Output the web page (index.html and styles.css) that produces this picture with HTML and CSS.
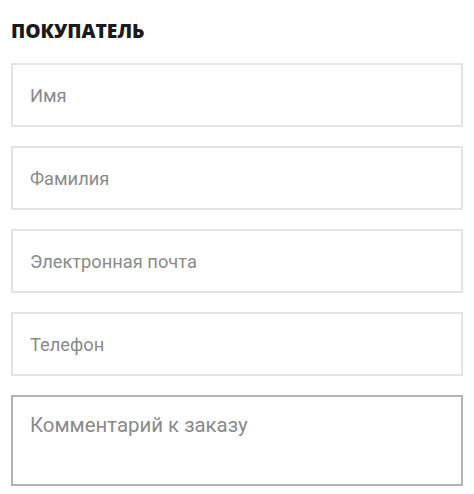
FILE: index.html
```html
<!DOCTYPE html>
<html>
  <head>
    <title>Покупатель</title>
    <meta name="viewport" content="width=device-width, initial-scale=1" />
    <link rel="stylesheet" href="styles.css">
  </head>
  <body>
    <div class="buyer">
      <h2 class="buyer-title">ПОКУПАТЕЛЬ</h2>
      <form class="buyer-form">
        <input class="field" type="text" placeholder="Имя">
        <input class="field" type="text" placeholder="Фамилия">
        <input class="field" type="email" placeholder="Электронная почта">
        <input class="field" type="tel" placeholder="Телефон">
        <textarea class="field comment" placeholder="Комментарий к заказу"></textarea>
      </form>
    </div>
  </body>
</html>
```

FILE: styles.css
```css
html {
  font-family: Roboto, "Noto Sans", sans-serif;
}
body {
  margin: 0;
  background-color: white;
}
.buyer {
  padding: 18px 11px 0 11px;
}
.buyer-title {
  margin: 0 0 19px 0;
  font-family: "Open Sans", Roboto, sans-serif;
  font-size: 19.3px;
  font-weight: 800;
  line-height: 26px;
  color: #1a1a1a;
}
.buyer-form {
  display: flex;
  flex-direction: column;
  gap: 19px;
}
.field {
  box-sizing: border-box;
  width: 100%;
  height: 64px;
  margin: 0;
  padding: 0 17px;
  border: 2px solid #e4e4e4;
  border-radius: 0;
  font-family: Roboto, sans-serif;
  font-size: 18.3px;
  color: #333;
  background: white;
  outline: none;
}
.field::placeholder {
  color: #8a8a8a;
}
.comment {
  height: 91px;
  padding: 16px 17px;
  border-color: #b4b4b4;
  font-size: 20.4px;
  resize: none;
}
```
